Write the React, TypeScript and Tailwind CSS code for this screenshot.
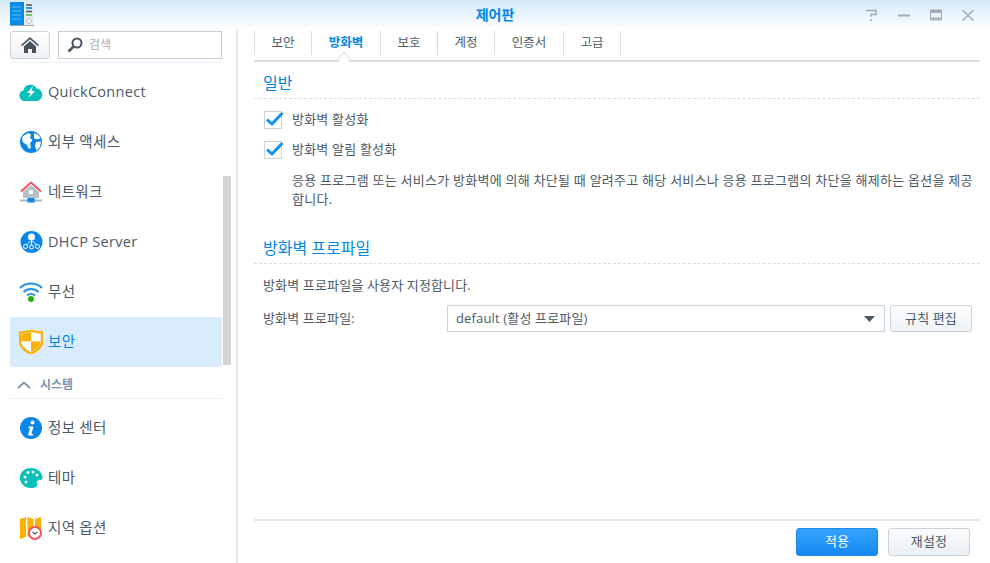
const FONT = "font-['Open_Sans','Noto_Sans_CJK_KR',sans-serif]"

function AppLogo() {
  return (
    <svg width="25" height="25" viewBox="0 0 25 25" className="ml-[10px]">
      <rect x="0" y="0" width="24" height="24" fill="#9aa5ad" />
      <rect x="0" y="0" width="14" height="23" fill="#0a8be8" />
      <rect x="14" y="0" width="10" height="23" fill="#e8ebee" />
      <path d="M2 5h9M2 9h9M2 13h9M2 17h9" stroke="#5cc0f5" strokeWidth="1" />
      <path d="M16 3h6" stroke="#444f59" strokeWidth="1.5" />
      <path d="M16 6h6" stroke="#1d9ae8" strokeWidth="2" />
      <path d="M16 9.5h6" stroke="#444f59" strokeWidth="1.5" />
      <path d="M16 13h6" stroke="#55b33b" strokeWidth="1.5" />
      <circle cx="19" cy="19" r="2.5" fill="#fff" stroke="#b7c0c8" />
    </svg>
  )
}

function QuickIcon() {
  return (
    <svg width="24" height="22" viewBox="0 0 24 22">
      <path d="M6 20a5.500 5.500 0 0 1-1.500-10.800A7 7 0 0 1 17.500 7.500a6.300 6.300 0 0 1 .5 12.500z" fill="#06bfb8" />
      <path d="M14 5l-6 7h3.500l-2 5L16 10h-3.500z" fill="#fff" />
    </svg>
  )
}

function GlobeIcon() {
  return (
    <svg width="24" height="24" viewBox="0 0 24 24">
      <circle cx="12" cy="12" r="11" fill="#0a86e6" />
      <path d="M4 6l5-3 3 1.500-1 3.500 2.500 2-2.500 3.500 1 4-2 1.500-2.500-4.500-3.500-2-1-3.500zM15 3l4 1.500 2.500 3.500-2.500 1.500-4-1zM17 12l5-.5-1 5.500-3.500 3.500-1.500-4.500z" fill="#fff" />
    </svg>
  )
}

function HouseIcon() {
  return (
    <svg width="24" height="24" viewBox="0 0 24 24">
      <path d="M4 12l8-7 8 7v6H4z" fill="#b4bfc9" />
      <path d="M2 11.500L12 2.500l10 9" fill="none" stroke="#f0545c" strokeWidth="2" />
      <rect x="10" y="10" width="4" height="4" fill="#fff" />
      <path d="M1 20.500h22" stroke="#a9b4be" strokeWidth="2" />
      <rect x="8.500" y="18" width="7" height="4.500" fill="#0a86e6" />
    </svg>
  )
}

function DhcpIcon() {
  return (
    <svg width="24" height="24" viewBox="0 0 24 24">
      <circle cx="12.500" cy="12" r="11" fill="#0a86e6" />
      <circle cx="12.500" cy="7" r="3.500" fill="#fff" />
      <path d="M12.500 10v6M11.500 11l-5 5M13.500 11l5 5" stroke="#fff" strokeWidth="1" />
      <circle cx="6.500" cy="16.500" r="2" fill="#0a86e6" stroke="#fff" />
      <circle cx="12.500" cy="17" r="2" fill="#0a86e6" stroke="#fff" />
      <circle cx="18.500" cy="16.500" r="2" fill="#0a86e6" stroke="#fff" />
    </svg>
  )
}

function WifiIcon() {
  return (
    <svg width="24" height="22" viewBox="0 0 24 22">
      <path d="M1 7a16 16 0 0 1 22 0M4.500 11a11 11 0 0 1 15 0M8 14.500a6 6 0 0 1 8 0" fill="none" stroke="#1a93ec" strokeWidth="2" />
      <circle cx="12" cy="18" r="3" fill="#22b014" />
    </svg>
  )
}

function ShieldIcon() {
  return (
    <svg width="24" height="24" viewBox="0 0 24 24">
      <path d="M2.500 3.800C6 3.700 8.500 3.200 12 2v9.500H2.500z" fill="#fbb002" />
      <path d="M12 2c3.500 1.200 6.500 1.700 9.500 1.800V11.500H12z" fill="#fff" />
      <path d="M12 11.500h9.500c0 4-3.500 7.500-9.500 10.300z" fill="#fbb002" />
      <path d="M12 11.500H2.500c0 4 3.500 7.500 9.500 10.300z" fill="#fff" />
      <path d="M12 0.500c4 1.500 7 2 11 2v9c0 5-4 9-11 12C5 20.500 1 16.500 1 11.500v-9c4 0 7-.5 11-2z" fill="none" stroke="#fbb002" strokeWidth="2.400" />
    </svg>
  )
}

function InfoIcon() {
  return (
    <svg width="24" height="24" viewBox="0 0 24 24">
      <circle cx="12" cy="12" r="11" fill="#0a86e6" />
      <circle cx="13.500" cy="6.500" r="2" fill="#fff" />
      <path d="M9.500 10.500h5l-2 7.500h1.800l-.5 1.500H9l2-7.500H9.200z" fill="#fff" />
    </svg>
  )
}

function PaletteIcon() {
  return (
    <svg width="24" height="22" viewBox="0 0 24 22">
      <path d="M12 1C5 1 1 5.500 1 11s4.500 10 11 10c6 0 7-2.500 6-4.500-1-2.500 1-3.500 3-3.500 2.500 0 3-2 2-5C21.500 4 17.500 1 12 1z" fill="#06bfb8" />
      <circle cx="6" cy="10" r="1.500" fill="#fff" />
      <circle cx="9" cy="5.500" r="1.500" fill="#fff" />
      <circle cx="14" cy="5" r="1.500" fill="#fff" />
      <circle cx="18" cy="8" r="1.500" fill="#fff" />
      <circle cx="7" cy="15" r="1.500" fill="#fff" />
    </svg>
  )
}

function MapIcon() {
  return (
    <svg width="24" height="24" viewBox="0 0 24 24">
      <path d="M1 3l6-2v20l-6 2zM8.500 1l6 2v14l-6 4zM16 3l6-2v12l-6 4z" fill="#fbb002" />
      <circle cx="16" cy="17" r="6" fill="#fff" stroke="#f0545c" strokeWidth="2" />
      <path d="M13.500 16l2.500 2 2.500-2" fill="none" stroke="#4a5560" strokeWidth="1.200" />
    </svg>
  )
}

function NavItem({ icon, label, active }: { icon: React.ReactNode; label: string; active?: boolean }) {
  return (
    <div className={`flex h-[50px] items-center rounded-[3px] pl-[9px] ${active ? 'bg-[#d9ecfd] text-[#0086e5]' : 'text-[#4c5a67]'}`}>
      <span className="flex w-[24px] justify-center">{icon}</span>
      <span className="ml-[5px] text-[14.500px] tracking-[0.3px]">{label}</span>
    </div>
  )
}

function Tab({ label, active }: { label: string; active?: boolean }) {
  return (
    <div className={`flex h-[24px] items-center justify-center border-r border-[#d5dee6] text-[12.500px] ${active ? 'font-bold text-[#0086e5]' : 'text-[#4c5a67]'}`}>
      {label}
    </div>
  )
}

function Check({ label }: { label: string }) {
  return (
    <div className="flex h-[18px] items-center">
      <span className="relative h-[18px] w-[18px] border border-[#c8d3dd] bg-white">
        <svg width="20" height="16" viewBox="0 0 20 16" className="absolute left-[0px] top-[-1px]">
          <path d="M2 8.500l5 4.500L17.500 2" fill="none" stroke="#1192f0" strokeWidth="3" />
        </svg>
      </span>
      <span className="ml-[10px] text-[13px] tracking-[0.2px] text-[#4c5a67]">{label}</span>
    </div>
  )
}

export default function App() {
  return (
    <div className={`${FONT} flex h-[563px] w-[990px] flex-col overflow-hidden bg-white`}>
      <div className="grid h-[29px] shrink-0 grid-cols-[1fr_auto_1fr] items-center bg-gradient-to-b from-[#d4e9fa] to-[#fdfeff]">
        <AppLogo />
        <div className="text-center text-[14px] font-bold text-[#0086e5]">제어판</div>
        <div className="flex items-center justify-end gap-[20px] pr-[16px] text-[#a3abb2]">
          <svg width="12" height="12" viewBox="0 0 12 12"><path d="M0 1.500h10v4H5v2M5 10v2" fill="none" stroke="#a3abb2" strokeWidth="1.500" /></svg>
          <svg width="12" height="12" viewBox="0 0 12 12"><path d="M0 6.500h12" stroke="#a3abb2" strokeWidth="2" /></svg>
          <svg width="12" height="12" viewBox="0 0 12 12"><path d="M0.500 1h11v10H.5z" fill="none" stroke="#a3abb2" /><path d="M0 2.500h12" stroke="#a3abb2" strokeWidth="3" /><path d="M0 9.500h12" stroke="#a3abb2" strokeWidth="2" /></svg>
          <svg width="12" height="12" viewBox="0 0 12 12"><path d="M0.500 1l11 10.500M11.500 1L.5 11.500" stroke="#a3abb2" strokeWidth="1.500" /></svg>
        </div>
      </div>
      <div className="flex min-h-0 flex-1">
        <div className="flex w-[238px] shrink-0 border-r-2 border-[#e8e9ea] pl-[10px]">
          <div className="w-[212px] shrink-0">
            <div className="flex h-[34px] gap-[8px] border-b border-[#eef1f3] pt-[2px]">
              <div className="flex h-[28px] w-[40px] items-center justify-center rounded-[3px] border border-[#c8d3dd] bg-gradient-to-b from-white to-[#eef2f5]">
                <svg width="18" height="16" viewBox="0 0 18 16"><path d="M9 0L0 8l1 1.200 8-7 8 7L18 8z M3 9.500L9 4l6 5.500V16h-4v-4H7v4H3z" fill="#47525d" /></svg>
              </div>
              <div className="flex h-[28px] w-[164px] items-center border border-[#c5d0dc] bg-white pl-[8px]">
                <svg width="16" height="16" viewBox="0 0 16 16"><circle cx="10" cy="6" r="4.500" fill="none" stroke="#47525d" strokeWidth="2" /><path d="M6.500 9.500L1.500 14.500" stroke="#47525d" strokeWidth="2.500" /></svg>
                <span className="ml-[6px] text-[12px] text-[#a7aeb5]">검색</span>
              </div>
            </div>
            <div className="pt-[4px]">
              <NavItem icon={<QuickIcon />} label="QuickConnect" />
              <NavItem icon={<GlobeIcon />} label="외부 액세스" />
              <NavItem icon={<HouseIcon />} label="네트워크" />
              <NavItem icon={<DhcpIcon />} label="DHCP Server" />
              <NavItem icon={<WifiIcon />} label="무선" />
              <NavItem icon={<ShieldIcon />} label="보안" active />
            </div>
            <div className="flex h-[32px] items-center border-b border-[#eef0f2] pl-[7px] pt-[5px] text-[#7b97b0]">
              <svg width="14" height="8" viewBox="0 0 14 8"><path d="M1 7l6-5.500L13 7" fill="none" stroke="#7b97b0" strokeWidth="1.800" /></svg>
              <span className="ml-[9px] text-[12px] font-bold">시스템</span>
            </div>
            <div className="pt-[4px]">
              <NavItem icon={<InfoIcon />} label="정보 센터" />
              <NavItem icon={<PaletteIcon />} label="테마" />
              <NavItem icon={<MapIcon />} label="지역 옵션" />
            </div>
          </div>
          <div className="ml-[1px] mt-[147px] h-[189px] w-[8px] bg-[#d3d4d6]" />
        </div>
        <div className="flex min-w-0 flex-1 flex-col pl-[16px] pr-[10px]">
          <div className="relative h-[33px] shrink-0 border-b-2 border-[#dcdfe1] pt-[2px]">
            <div className="flex w-fit border-l border-[#d5dee6]">
              <div className="w-[57px]"><Tab label="보안" /></div>
              <div className="w-[69px]"><Tab label="방화벽" active /></div>
              <div className="w-[57px]"><Tab label="보호" /></div>
              <div className="w-[57px]"><Tab label="계정" /></div>
              <div className="w-[69px]"><Tab label="인증서" /></div>
              <div className="w-[57px]"><Tab label="고급" /></div>
            </div>
            <span className="absolute left-[85px] top-[25px] h-[10px] w-[10px] rotate-45 border-l border-t border-[#dcdfe1] bg-white" />
          </div>
          <div className="h-[37px] shrink-0 border-b border-dashed border-[#d5dee6] pl-[9px] pt-[10px] text-[16px] leading-[22px] text-[#0086e5]">일반</div>
          <div className="flex flex-col gap-[12px] pl-[10px] pt-[12px]">
            <Check label="방화벽 활성화" />
            <Check label="방화벽 알림 활성화" />
          </div>
          <div className="pl-[38px] pr-[6px] pt-[12px] text-[13px] leading-[19px] tracking-[0.25px] text-[#4c5a67]">
            응용 프로그램 또는 서비스가 방화벽에 의해 차단될 때 알려주고 해당 서비스나 응용 프로그램의 차단을 해제하는 옵션을 제공합니다.
          </div>
          <div className="mt-[26px] h-[29px] shrink-0 border-b border-dashed border-[#d5dee6] pl-[9px] pt-[2px] text-[16px] leading-[22px] text-[#0086e5]">방화벽 프로파일</div>
          <div className="pl-[9px] pt-[12px] text-[13px] leading-[18px] tracking-[0.15px] text-[#4c5a67]">방화벽 프로파일을 사용자 지정합니다.</div>
          <div className="flex items-center pl-[9px] pt-[11px] text-[13px] tracking-[0.15px] text-[#4c5a67]">
            <span className="w-[184px]">방화벽 프로파일:</span>
            <div className="flex h-[27px] w-[438px] items-center justify-between border border-[#c8d3dd] bg-white pl-[8px] pr-[9px]">
              <span>default (활성 프로파일)</span>
              <svg width="11" height="6" viewBox="0 0 11 6"><path d="M0 0h11L5.500 6z" fill="#4c5a67" /></svg>
            </div>
            <div className="ml-[5px] flex h-[27px] w-[82px] items-center justify-center rounded-[3px] border border-[#c8d3dd] bg-gradient-to-b from-white to-[#eef2f5]">규칙 편집</div>
          </div>
          <div className="mt-auto flex h-[44px] shrink-0 items-start justify-end gap-[10px] border-t-2 border-[#e6e6e6] pr-[10px] pt-[7px] text-[13px] tracking-[0.15px]">
            <div className="flex h-[28px] w-[82px] items-center justify-center rounded-[3px] border border-[#1f8ae0] bg-gradient-to-b from-[#33a4fc] to-[#1389f2] text-white">적용</div>
            <div className="flex h-[28px] w-[82px] items-center justify-center rounded-[3px] border border-[#c8d3dd] bg-gradient-to-b from-[#fbfcfd] to-[#eaeff3] text-[#4c5a67]">재설정</div>
          </div>
        </div>
      </div>
    </div>
  )
}
